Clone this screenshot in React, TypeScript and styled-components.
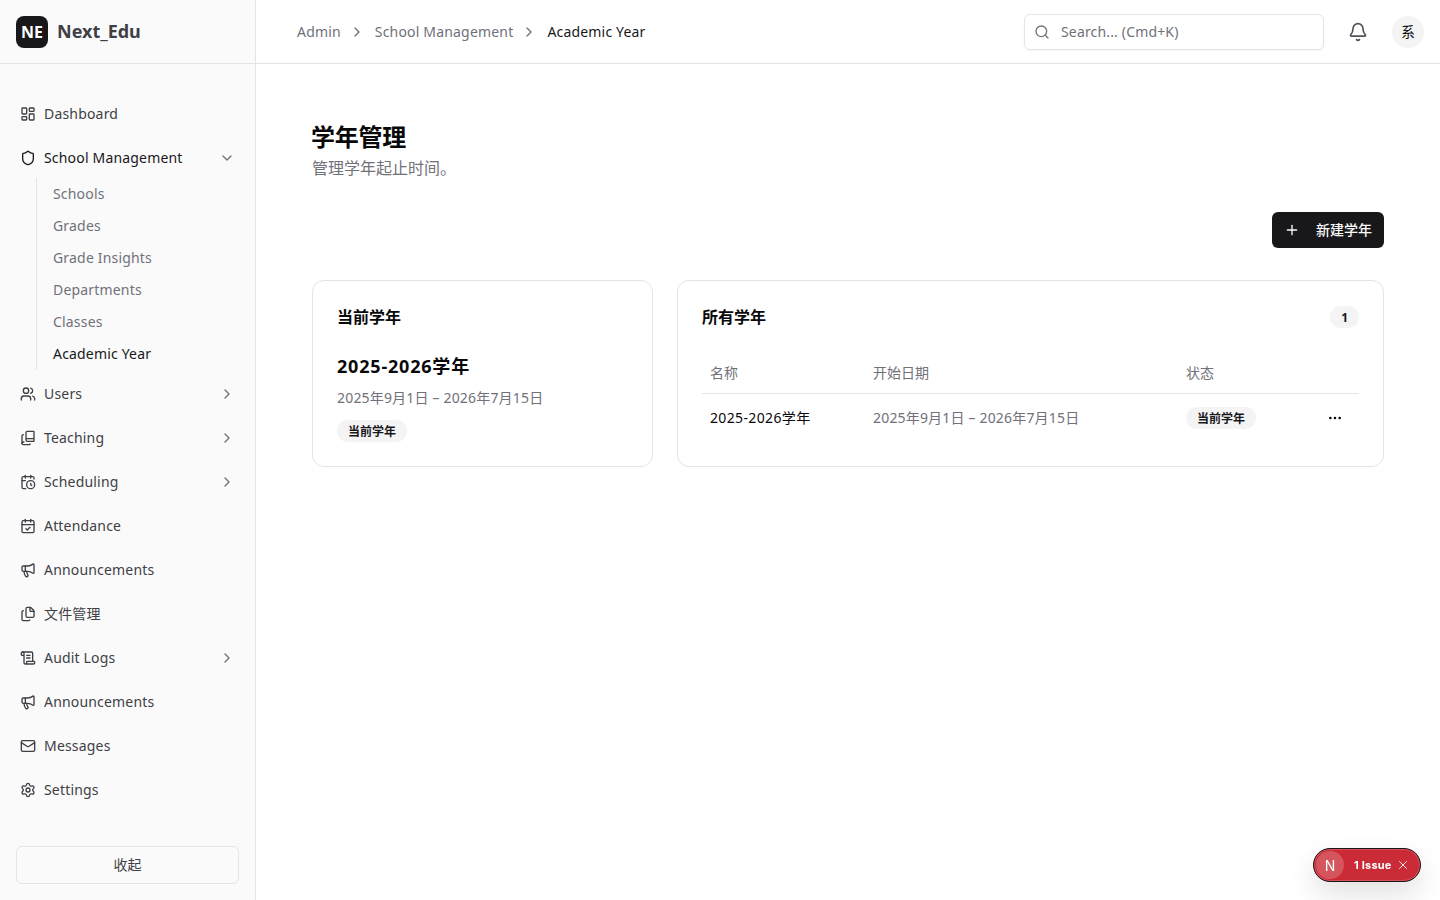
import { ReactNode } from "react";
import styled, { createGlobalStyle } from "styled-components";
import {
  Bell,
  BookCopy,
  CalendarCheck,
  CalendarClock,
  ChevronDown,
  ChevronRight,
  Ellipsis,
  Files,
  LayoutDashboard,
  Mail,
  Megaphone,
  Plus,
  ScrollText,
  Search,
  Settings,
  Shield,
  Users,
  X,
} from "lucide-react";

const GlobalStyle = createGlobalStyle`
  * {
    box-sizing: border-box;
  }

  html, body {
    margin: 0;
    height: 100%;
    background: #fff;
    color: #09090b;
    font-family: "Noto Sans", "Noto Sans CJK SC", sans-serif;
    font-size: 14px;
  }
`;

const Shell = styled.div`
  display: flex;
  height: 900px;
  overflow: hidden;
`;

const Sidebar = styled.aside`
  display: flex;
  flex-direction: column;
  flex: 0 0 256px;
  background: #fafafa;
  border-right: 1px solid #e4e4e7;
`;

const Brand = styled.div`
  display: flex;
  align-items: center;
  gap: 9px;
  height: 64px;
  padding: 0 16px;
  border-bottom: 1px solid #e4e4e7;
`;

const LogoMark = styled.div`
  display: flex;
  align-items: center;
  justify-content: center;
  width: 32px;
  height: 32px;
  border-radius: 8px;
  background: #18181b;
  color: #fff;
  font-size: 16px;
  font-weight: 700;
`;

const BrandName = styled.span`
  padding-bottom: 2px;
  color: #3f3f46;
  font-size: 18px;
  font-weight: 700;
`;

const Nav = styled.nav`
  flex: 1;
  padding: 32px 16px 0;
  letter-spacing: 0.18px;
`;

const NavRow = styled.div<{ $open?: boolean; $strong?: boolean }>`
  display: flex;
  align-items: center;
  gap: 8px;
  height: 36px;
  padding: 0 4px;
  margin-bottom: ${(p) => (p.$open ? "2px" : "8px")};
  color: ${(p) => (p.$strong ? "#18181b" : "#3f3f46")};
  line-height: 20px;

  svg {
    flex: none;
  }

  .chevron {
    margin-left: auto;
    color: #71717a;
  }
`;

const SubList = styled.div`
  margin: 0 0 6px 20px;
  padding-left: 16px;
  border-left: 1px solid #e4e4e7;
`;

const SubItem = styled.div<{ $active?: boolean }>`
  display: flex;
  align-items: center;
  height: 32px;
  padding-bottom: 2px;
  color: ${(p) => (p.$active ? "#18181b" : "#71717a")};
`;

const CollapseButton = styled.button`
  display: block;
  width: 223px;
  height: 38px;
  margin: 0 16px 16px;
  padding: 0 0 2px;
  border: 1px solid #e4e4e7;
  border-radius: 6px;
  background: #fafafa;
  color: #3f3f46;
  font: inherit;
`;

const Content = styled.div`
  flex: 1;
  min-width: 0;
`;

const TopBar = styled.header`
  display: flex;
  align-items: center;
  height: 64px;
  padding: 0 16px 0 41px;
  border-bottom: 1px solid #e4e4e7;
`;

const Crumbs = styled.div`
  display: flex;
  align-items: center;
  flex: 1;
  color: #71717a;
  letter-spacing: 0.18px;

  svg {
    margin: 0 10px 0 8px;
  }
`;

const CrumbCurrent = styled.span`
  color: #18181b;
`;

const SearchBox = styled.div`
  display: flex;
  align-items: center;
  gap: 11px;
  width: 300px;
  height: 36px;
  padding: 0 9px;
  border: 1px solid #e4e4e7;
  border-radius: 6px;
  box-shadow: 0 1px 2px rgba(0, 0, 0, 0.05);
  color: #71717a;
  letter-spacing: 0.16px;
`;

const BellButton = styled.div`
  display: flex;
  margin-left: 24px;
  color: #52525b;
`;

const Avatar = styled.div`
  display: flex;
  align-items: center;
  justify-content: center;
  width: 32px;
  height: 32px;
  margin-left: 24px;
  padding-bottom: 2px;
  border-radius: 50%;
  background: #f4f4f5;
  color: #09090b;
  font-size: 14px;
`;

const Main = styled.main`
  padding: 56px 56px 0;
`;

const PageTitle = styled.h1`
  margin: 0 0 0 -1px;
  font-size: 24px;
  font-weight: 700;
  line-height: 33px;
  letter-spacing: -0.25px;
  color: #09090b;
`;

const PageSubtitle = styled.p`
  margin: 3px 0 0;
  font-size: 16px;
  line-height: 24px;
  color: #71717a;
`;

const Toolbar = styled.div`
  display: flex;
  justify-content: flex-end;
  margin: 32px 0;
`;

const PrimaryButton = styled.button`
  display: flex;
  align-items: center;
  gap: 16px;
  height: 36px;
  padding: 0 12px;
  border: 0;
  border-radius: 6px;
  background: #18181b;
  color: #fafafa;
  font: inherit;
  font-weight: 500;

  span {
    padding-bottom: 2px;
  }
`;

const Cards = styled.div`
  display: grid;
  grid-template-columns: 341px 1fr;
  gap: 24px;
  align-items: start;
`;

const Card = styled.section`
  padding: 24px;
  border: 1px solid #e4e4e7;
  border-radius: 12px;
  background: #fff;
`;

const CardHead = styled.div`
  display: flex;
  align-items: center;
  justify-content: space-between;
  height: 24px;
`;

const CardTitle = styled.h2`
  margin: 0;
  font-size: 16px;
  font-weight: 700;
  line-height: 24px;
`;

const YearName = styled.div`
  margin-top: 23px;
  font-size: 18px;
  font-weight: 700;
  line-height: 28px;
  letter-spacing: 0.8px;
`;

const YearRange = styled.div`
  margin: 8px 0 12px;
  line-height: 20px;
  letter-spacing: 0.18px;
  color: #71717a;
`;

const Badge = styled.span`
  display: flex;
  align-items: center;
  width: fit-content;
  height: 22px;
  padding: 0 11px;
  border-radius: 11px;
  background: #f4f4f5;
  color: #18181b;
  font-size: 12px;
  font-weight: 700;
`;

const Table = styled.table`
  width: 100%;
  margin: 24px 0 1px;
  border-collapse: collapse;
  table-layout: fixed;
`;

const HeadCell = styled.th`
  height: 40px;
  padding: 0 8px 1px;
  border-bottom: 1px solid #e4e4e7;
  color: #71717a;
  font-size: 14px;
  font-weight: 400;
  text-align: left;
`;

const Cell = styled.td<{ $muted?: boolean; $spacing?: number }>`
  height: 48px;
  padding: 0 8px 1px;
  color: ${(p) => (p.$muted ? "#71717a" : "#09090b")};
  letter-spacing: ${(p) => p.$spacing ?? 0}px;
`;

const BadgeCell = styled(Cell)`
  padding: 1px 8px 0;
`;

const ActionCell = styled(Cell)`
  padding: 1px 16px 0 8px;

  svg {
    display: block;
    margin-left: auto;
  }
`;

const IssuePill = styled.div`
  position: fixed;
  right: 19px;
  bottom: 18px;
  display: flex;
  align-items: center;
  width: 108px;
  height: 34px;
  padding: 0 10px 0 2px;
  border: 1px solid #18181b;
  border-radius: 17px;
  background: #cb2b36;
  box-shadow: inset 0 0 0 1px rgba(255, 255, 255, 0.18), 0 12px 28px rgba(0, 0, 0, 0.12);
  color: #fff;
  font-family: Inter, sans-serif;
  font-size: 11px;
  font-weight: 700;
  letter-spacing: 0.2px;
`;

const IssueLogo = styled.div`
  display: flex;
  align-items: center;
  justify-content: center;
  width: 28px;
  height: 28px;
  margin-right: 10px;
  border-radius: 50%;
  background: rgba(255, 255, 255, 0.2);
  font-size: 14px;
  font-weight: 400;
`;

const IssueClose = styled(X)`
  margin-left: auto;
`;

type Item = { label: string; icon: ReactNode; more?: boolean };

const firstItems: Item[] = [
  { label: "Users", icon: <Users size={16} />, more: true },
  { label: "Teaching", icon: <BookCopy size={16} />, more: true },
  { label: "Scheduling", icon: <CalendarClock size={16} />, more: true },
  { label: "Attendance", icon: <CalendarCheck size={16} /> },
  { label: "Announcements", icon: <Megaphone size={16} /> },
  { label: "文件管理", icon: <Files size={16} /> },
  { label: "Audit Logs", icon: <ScrollText size={16} />, more: true },
  { label: "Announcements", icon: <Megaphone size={16} /> },
  { label: "Messages", icon: <Mail size={16} /> },
  { label: "Settings", icon: <Settings size={16} /> },
];

const subItems = ["Schools", "Grades", "Grade Insights", "Departments", "Classes", "Academic Year"];

const App = () => {
  return (
    <Shell>
      <GlobalStyle />
      <Sidebar>
        <Brand>
          <LogoMark>NE</LogoMark>
          <BrandName>Next_Edu</BrandName>
        </Brand>
        <Nav>
          <NavRow>
            <LayoutDashboard size={16} />
            Dashboard
          </NavRow>
          <NavRow $open $strong>
            <Shield size={16} />
            School Management
            <ChevronDown className="chevron" size={16} />
          </NavRow>
          <SubList>
            {subItems.map((name) => (
              <SubItem key={name} $active={name === "Academic Year"}>
                {name}
              </SubItem>
            ))}
          </SubList>
          {firstItems.map((item, i) => (
            <NavRow key={i}>
              {item.icon}
              {item.label}
              {item.more && <ChevronRight className="chevron" size={16} />}
            </NavRow>
          ))}
        </Nav>
        <CollapseButton>收起</CollapseButton>
      </Sidebar>
      <Content>
        <TopBar>
          <Crumbs>
            Admin
            <ChevronRight size={16} />
            School Management
            <ChevronRight size={16} />
            <CrumbCurrent>Academic Year</CrumbCurrent>
          </Crumbs>
          <SearchBox>
            <Search size={16} />
            Search... (Cmd+K)
          </SearchBox>
          <BellButton>
            <Bell size={20} />
          </BellButton>
          <Avatar>系</Avatar>
        </TopBar>
        <Main>
          <PageTitle>学年管理</PageTitle>
          <PageSubtitle>管理学年起止时间。</PageSubtitle>
          <Toolbar>
            <PrimaryButton>
              <Plus size={16} />
              <span>新建学年</span>
            </PrimaryButton>
          </Toolbar>
          <Cards>
            <Card>
              <CardHead>
                <CardTitle>当前学年</CardTitle>
              </CardHead>
              <YearName>2025-2026学年</YearName>
              <YearRange>2025年9月1日 – 2026年7月15日</YearRange>
              <Badge>当前学年</Badge>
            </Card>
            <Card>
              <CardHead>
                <CardTitle>所有学年</CardTitle>
                <Badge>1</Badge>
              </CardHead>
              <Table>
                <colgroup>
                  <col style={{ width: 163 }} />
                  <col style={{ width: 313 }} />
                  <col style={{ width: 130 }} />
                  <col />
                </colgroup>
                <thead>
                  <tr>
                    <HeadCell>名称</HeadCell>
                    <HeadCell>开始日期</HeadCell>
                    <HeadCell>状态</HeadCell>
                    <HeadCell />
                  </tr>
                </thead>
                <tbody>
                  <tr>
                    <Cell $spacing={0.36}>2025-2026学年</Cell>
                    <Cell $muted $spacing={0.18}>
                      2025年9月1日 – 2026年7月15日
                    </Cell>
                    <BadgeCell>
                      <Badge>当前学年</Badge>
                    </BadgeCell>
                    <ActionCell>
                      <Ellipsis size={16} />
                    </ActionCell>
                  </tr>
                </tbody>
              </Table>
            </Card>
          </Cards>
        </Main>
      </Content>
      <IssuePill>
        <IssueLogo>N</IssueLogo>
        1 Issue
        <IssueClose size={14} strokeWidth={1.5} />
      </IssuePill>
    </Shell>
  );
};

export default App;
